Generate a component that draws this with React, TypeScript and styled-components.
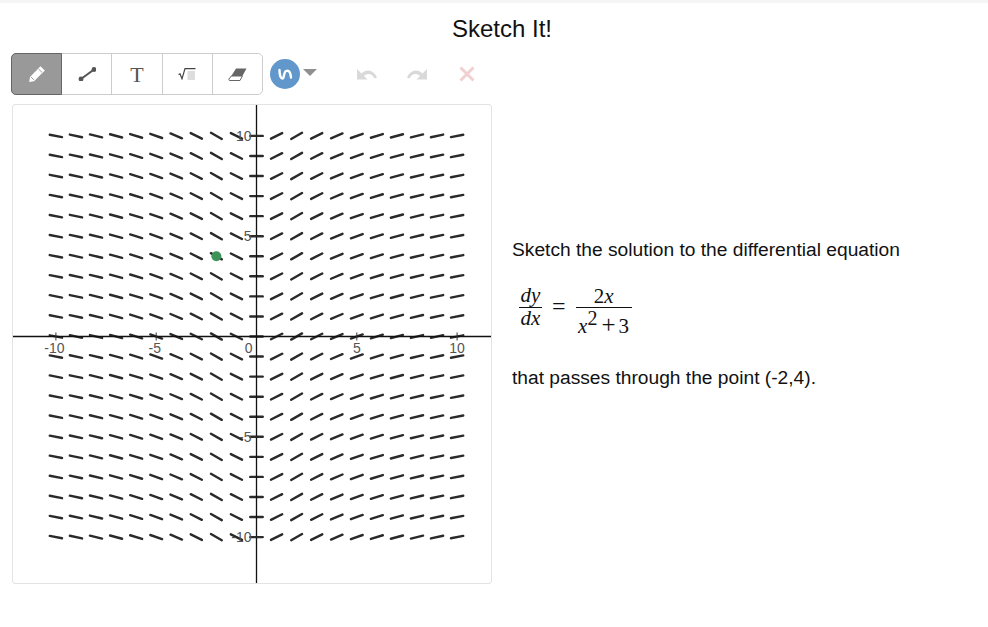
import React from "react";
import styled, { createGlobalStyle } from "styled-components";

const GlobalStyle = createGlobalStyle`
  html, body {
    margin: 0;
    padding: 0;
    background: #fff;
    font-family: "Liberation Sans", Arial, sans-serif;
    color: #111;
  }
`;

const Page = styled.div`
  width: 988px;
  height: 627px;
  overflow: hidden;
  border-top: 3px solid #f5f5f5;
  box-sizing: border-box;
`;

const Title = styled.h1`
  margin: 0;
  padding: 12px 0 0 16px;
  height: 50px;
  box-sizing: border-box;
  text-align: center;
  font-size: 24px;
  line-height: 28px;
  font-weight: 400;
  color: #111;
`;

const Columns = styled.div`
  display: flex;
  align-items: flex-start;
  padding-left: 11px;
`;

const LeftColumn = styled.div`
  width: 481px;
  flex: none;
`;

const ToolRow = styled.div`
  display: flex;
  align-items: center;
  height: 42px;
  margin-bottom: 9px;
`;

const ToolGroup = styled.div`
  display: flex;
  height: 42px;
  box-sizing: border-box;
  border: 1px solid #ccc;
  border-radius: 5px;
  width: 252px;
`;

const ToolButton = styled.button<{ $active?: boolean }>`
  flex: 1 1 0;
  padding: 0;
  margin: ${(p) => (p.$active ? "-1px 0 -1px -1px" : "0")};
  display: flex;
  align-items: center;
  justify-content: center;
  background: ${(p) => (p.$active ? "#999" : "#fff")};
  border: ${(p) => (p.$active ? "1px solid #666" : "none")};
  border-right: ${(p) => (p.$active ? "1px solid #666" : "1px solid #ccc")};
  border-radius: ${(p) => (p.$active ? "5px 0 0 5px" : "0")};
  &:last-child {
    border-right: none;
    border-radius: 0 5px 5px 0;
  }
`;

const TextIcon = styled.span`
  font-family: "Liberation Serif", serif;
  font-size: 22px;
  line-height: 23px;
  color: #555;
  font-weight: 400;
`;

const PenCircle = styled.div`
  width: 30px;
  height: 30px;
  margin-left: 7px;
  border-radius: 50%;
  background: #6297cb;
  display: flex;
  align-items: center;
  justify-content: center;
`;

const Caret = styled.div`
  width: 0;
  height: 0;
  margin-left: 3px;
  margin-top: -3px;
  border-left: 7px solid transparent;
  border-right: 7px solid transparent;
  border-top: 7px solid #8f8f8f;
`;

const HistoryGroup = styled.div`
  display: flex;
  align-items: center;
  margin-left: 40px;
  gap: 30px;
`;

const CloseMark = styled.svg`
  margin-left: 2px;
`;

const GraphPanel = styled.div`
  width: 480px;
  height: 480px;
  margin-left: 1px;
  box-sizing: border-box;
  border: 1px solid #e3e3e3;
  border-radius: 3px;
  overflow: hidden;
`;

const RightColumn = styled.div`
  margin-left: 20px;
  padding-top: 186px;
  font-size: 19.2px;
  line-height: 22px;
  color: #111;
`;

const Paragraph = styled.p`
  margin: 0;
`;

const Equation = styled.div`
  display: flex;
  align-items: flex-start;
  margin: 24px 0 0 7px;
  height: 82px;
  font-family: "Liberation Serif", serif;
  font-size: 21px;
  color: #111;
`;

const Fraction = styled.div<{ $width: number }>`
  width: ${(p) => p.$width}px;
  display: flex;
  flex-direction: column;
  align-items: center;
`;

const Numerator = styled.div<{ $lift: number }>`
  width: 100%;
  height: 23px;
  box-sizing: border-box;
  padding-bottom: ${(p) => p.$lift}px;
  display: flex;
  align-items: flex-end;
  justify-content: center;
  line-height: 20px;
  border-bottom: 1px solid #111;
`;

const Denominator = styled.div<{ $height: number }>`
  line-height: ${(p) => p.$height}px;
  white-space: nowrap;
`;

const Variable = styled.i`
  font-style: italic;
`;

const Equals = styled.span`
  margin: 9px 10px 0 10px;
  font-size: 24px;
  line-height: 24px;
`;

const Power = styled.sup`
  font-size: 20px;
  line-height: 0;
  vertical-align: 8px;
  margin-right: 4px;
`;

const Plus = styled.span`
  font-size: 25px;
  line-height: 0;
  margin-right: 3px;
`;

// the slope field lives in the panel's own coordinates, panel corner is (13,105)
const UNIT = 20.06;
const OX = 243.5;
const OY = 231.5;
const SEG = 12.5;
const range = Array.from({ length: 21 }, (_, i) => i - 10);

const slope = (x: number) => (2 * x) / (x * x + 3);

const Field: React.FC = () => (
  <svg width="478" height="478" viewBox="0 0 478 478" style={{ display: "block" }}>
    {range.map((y) =>
      range.map((x) => {
        const a = Math.atan(slope(x));
        const dx = (Math.cos(a) * SEG) / 2;
        const dy = (Math.sin(a) * SEG) / 2;
        const cx = OX + x * UNIT;
        const cy = OY - y * UNIT;
        return (
          <line
            key={`${x}_${y}`}
            x1={cx - dx}
            y1={cy + dy}
            x2={cx + dx}
            y2={cy - dy}
            stroke="#2a2a2a"
            strokeWidth="2.4"
            strokeLinecap="round"
          />
        );
      })
    )}
    <line x1="0" y1={OY} x2="478" y2={OY} stroke="#111" strokeWidth="1.3" />
    <line x1={OX} y1="0" x2={OX} y2="478" stroke="#111" strokeWidth="1.3" />
    {[-10, -5, 5, 10].map((v) => (
      <g key={v}>
        <line x1={OX + v * UNIT} y1={OY - 4} x2={OX + v * UNIT} y2={OY + 4} stroke="#333" strokeWidth="1" />
        <line x1={OX - 4} y1={OY - v * UNIT} x2={OX + 4} y2={OY - v * UNIT} stroke="#333" strokeWidth="1" />
        <text
          x={OX + v * UNIT - (v < 0 ? 1.5 : 0)}
          y={OY + 16}
          textAnchor="middle"
          fontFamily="Liberation Sans, sans-serif"
          fontSize="14"
          fill="#555"
        >
          {v}
        </text>
        <text
          x={OX - 5}
          y={OY - v * UNIT + 5}
          textAnchor="end"
          fontFamily="Liberation Sans, sans-serif"
          fontSize="14"
          fill="#555"
        >
          {v}
        </text>
      </g>
    ))}
    <text x={OX - 4} y={OY + 16} textAnchor="end" fontFamily="Liberation Sans, sans-serif" fontSize="14" fill="#555">
      0
    </text>
    <circle cx={OX - 2 * UNIT} cy={OY - 4 * UNIT} r="5" fill="#3d9459" />
  </svg>
);

const PencilIcon = () => (
  <svg width="18" height="18" viewBox="0 0 18 18">
    <path d="M12.5 1.2 16.8 5.4 6 16.2 1.2 17 2 12Z" fill="#fff" />
    <path d="M10.6 4 14 7.4M3.2 12.2 5.8 14.8" stroke="#999" strokeWidth="1" fill="none" />
  </svg>
);

const PointIcon = () => (
  <svg width="18" height="14" viewBox="0 0 18 14">
    <line x1="3" y1="12" x2="16" y2="2.5" stroke="#555" strokeWidth="2.1" />
    <circle cx="3" cy="12" r="2.4" fill="#555" />
    <circle cx="16" cy="2.5" r="2.4" fill="#555" />
  </svg>
);

const RootIcon = () => (
  <svg width="18" height="12" viewBox="0 0 18 12">
    <path d="M0.5 6.5 2 5.8 4 10.8 7 0.7H17.5" stroke="#444" strokeWidth="1.2" fill="none" />
    <rect x="9.5" y="3" width="7.5" height="9" fill="#ddd" />
  </svg>
);

const EraserIcon = () => (
  <svg width="19" height="13" viewBox="0 0 19 13">
    <path d="M8 0.5H18.5L14.4 8H3.3Z" fill="#666" />
    <path d="M3.3 8H14.4L12 12.5H1.4L0.8 11.2Z" fill="#fff" stroke="#666" strokeWidth="1" />
  </svg>
);

const PenMark = () => (
  <svg width="18" height="16" viewBox="0 0 18 16">
    <path d="M3.5 4C3.5 8 4.5 12.5 6.5 12.5C8.5 12.5 7.5 6 10 5C12.5 4 14 6 14.5 8.5L15 11.5" stroke="#fff" strokeWidth="2.4" fill="none" strokeLinecap="round" />
  </svg>
);

const UndoIcon: React.FC<{ flip?: boolean }> = ({ flip }) => (
  <svg width="20" height="12" viewBox="0 0 20 12" style={flip ? { transform: "scaleX(-1)" } : undefined}>
    <path d="M0 1V11.5H10.5L7 8C10 5 15 5 17.5 10.5L20 9.5C16.5 1.5 9 0.5 4.5 5.6Z" fill="#d9d9d9" />
  </svg>
);

const CloseIcon = () => (
  <CloseMark width="16" height="16" viewBox="0 0 16 16">
    <path d="M1.5 1.5 14.5 14.5M14.5 1.5 1.5 14.5" stroke="#f0d0d0" strokeWidth="3" />
  </CloseMark>
);

export default function App() {
  return (
    <Page>
      <GlobalStyle />
      <Title>Sketch It!</Title>
      <Columns>
        <LeftColumn>
          <ToolRow>
            <ToolGroup>
              <ToolButton $active>
                <PencilIcon />
              </ToolButton>
              <ToolButton>
                <PointIcon />
              </ToolButton>
              <ToolButton>
                <TextIcon>T</TextIcon>
              </ToolButton>
              <ToolButton>
                <RootIcon />
              </ToolButton>
              <ToolButton>
                <EraserIcon />
              </ToolButton>
            </ToolGroup>
            <PenCircle>
              <PenMark />
            </PenCircle>
            <Caret />
            <HistoryGroup>
              <UndoIcon />
              <UndoIcon flip />
              <CloseIcon />
            </HistoryGroup>
          </ToolRow>
          <GraphPanel>
            <Field />
          </GraphPanel>
        </LeftColumn>
        <RightColumn>
          <Paragraph>Sketch the solution to the differential equation</Paragraph>
          <Equation>
            <Fraction $width={23}>
              <Numerator $lift={2}>
                <Variable>dy</Variable>
              </Numerator>
              <Denominator $height={20}>
                <Variable>dx</Variable>
              </Denominator>
            </Fraction>
            <Equals>=</Equals>
            <Fraction $width={56}>
              <Numerator $lift={1}>
                <span>
                  2<Variable>x</Variable>
                </span>
              </Numerator>
              <Denominator $height={36}>
                <Variable>x</Variable>
                <Power>2</Power>
                <Plus>+</Plus>3
              </Denominator>
            </Fraction>
          </Equation>
          <Paragraph>that passes through the point (-2,4).</Paragraph>
        </RightColumn>
      </Columns>
    </Page>
  );
}
